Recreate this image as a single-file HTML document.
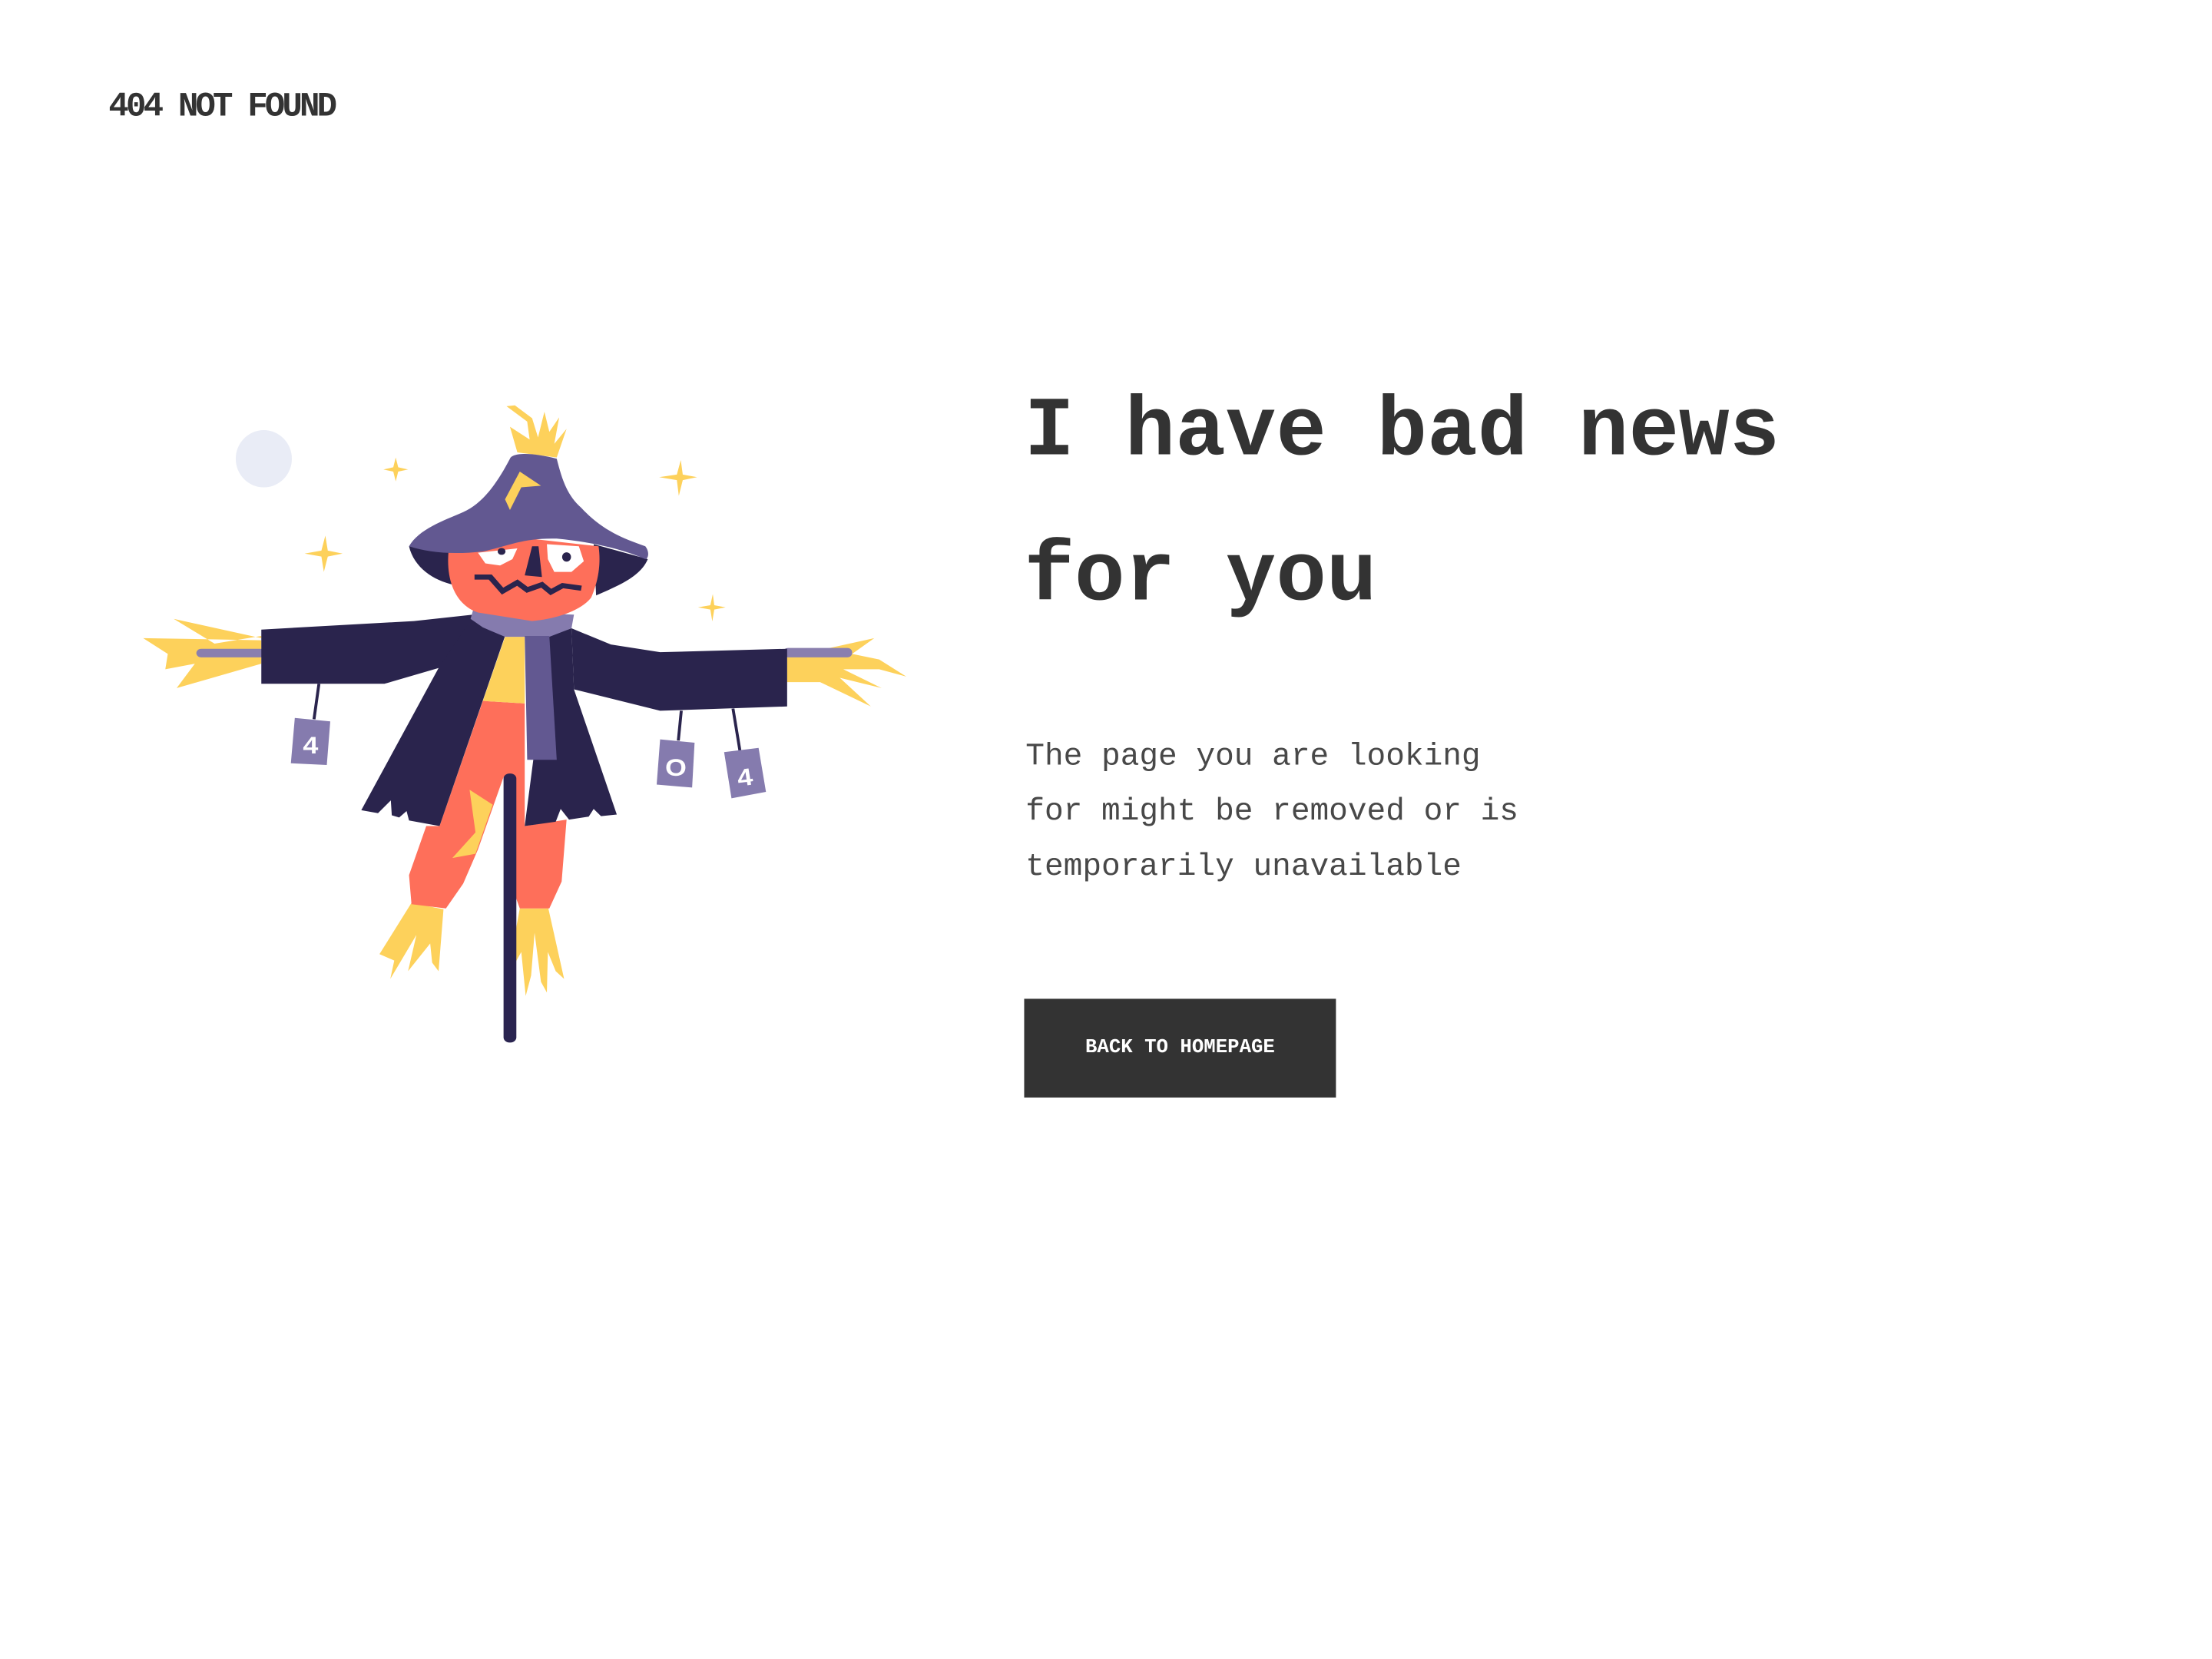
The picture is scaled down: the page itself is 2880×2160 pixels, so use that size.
<!DOCTYPE html>
<html><head><meta charset="utf-8"><style>
html,body{margin:0;padding:0;background:#fff;width:2880px;height:2160px;overflow:hidden}
#w{position:absolute;left:0;top:0;width:1568px;height:1176px;transform:scale(1.83673);transform-origin:0 0;font-family:"Liberation Mono","DejaVu Sans Mono",monospace;color:#333}
.logo{position:absolute;left:77px;top:62px;font-size:24px;font-weight:bold;letter-spacing:-2.1px;line-height:30px}
h1{position:absolute;left:726px;top:255px;margin:0;font-size:59.5px;font-weight:bold;line-height:103px;letter-spacing:0}
p{position:absolute;left:727px;top:517px;margin:0;font-size:22.4px;line-height:39px;color:#484848}
.btn{position:absolute;left:726px;top:708px;width:221px;height:70px;background:#333;color:#fff;font-size:14px;font-weight:bold;line-height:70px;text-align:center}
svg{position:absolute;left:0;top:0}
</style></head><body>
<div id="w">
<div class="logo">404 NOT FOUND</div>
<h1>I have bad news<br>for you</h1>
<p>The page you are looking<br>for might be removed or is<br>temporarily unavailable</p>
<div class="btn">BACK TO HOMEPAGE</div>
</div>
<svg width="2880" height="2160" viewBox="0 0 2880 2160">
<g transform="translate(180,500) scale(0.641,0.556)">
<ellipse cx="255" cy="175" rx="57" ry="67" fill="#e9ecf6"/>
<g fill="#fdd15b">
<path d="M523,172 L528,195 L548,200 L528,205 L523,228 L518,205 L498,200 L518,195Z"/>
<path d="M380,355 L385,390 L415,397 L385,404 L377,440 L372,404 L338,397 L372,390Z"/>
<path d="M1102,178 L1106,212 L1135,218 L1106,225 L1098,262 L1094,225 L1058,218 L1094,212Z"/>
<path d="M1167,492 L1170,518 L1193,523 L1170,528 L1166,556 L1162,528 L1137,523 L1162,518Z"/>
<path d="M250,590 L155,608 L72,550 L250,595 Z M250,600 L10,595 L60,632 L55,668 L115,655 L78,712 L250,655Z"/>
<path d="M1318,640 L1495,595 L1450,632 L1505,645 L1560,685 L1505,668 L1432,668 L1510,712 L1425,688 L1488,755 L1385,698 L1318,698Z"/>
<path d="M770,160 L755,100 L795,130 L790,88 L748,52 L765,50 L800,80 L812,125 L825,65 L835,112 L855,78 L845,140 L870,105 L850,172Z"/>
<path d="M555,1215 L620,1230 L610,1375 L597,1355 L593,1310 L548,1375 L565,1290 L512,1393 L520,1350 L490,1335Z"/>
<path d="M775,1228 L833,1228 L865,1393 L848,1375 L832,1330 L830,1425 L818,1400 L805,1285 L798,1385 L787,1433 L778,1330 L745,1398 L765,1290Z"/>
</g>
<rect x="118" y="620" width="140" height="20" rx="10" fill="#8a7fae"/>
<rect x="1310" y="618" width="140" height="22" rx="10" fill="#8a7fae"/>
<path d="M700,742 L785,748 L785,1035 L870,1020 L860,1165 L835,1228 L775,1228 L760,1180 L752,1100 L742,920 L690,1090 L660,1170 L625,1228 L555,1218 L550,1150 L585,1035 L612,1035Z" fill="#fe6f5a"/>
<path d="M673,950 L720,985 L685,1100 L638,1110 L685,1050Z" fill="#fdd15b"/>
<rect x="742" y="912" width="26" height="630" rx="12" fill="#2a2450"/>
<path d="M745,592 L785,592 L785,748 L700,742Z" fill="#fdd15b"/>
<g fill="#2a244d">
<path d="M250,575 L560,555 L680,540 L700,560 L610,665 L500,702 L250,702Z"/>
<path d="M880,572 L960,610 L1060,628 L1318,620 L1318,755 L1060,765 L885,715Z"/>
<path d="M680,545 L745,590 L612,1035 L550,1022 L545,1000 L530,1015 L515,1010 L513,975 L487,1005 L453,998 L610,665Z"/>
<path d="M880,572 L835,590 L785,1035 L848,1025 L858,995 L875,1020 L915,1013 L925,995 L940,1012 L972,1008 L885,715Z"/>
</g>
<path d="M680,530 L885,540 L880,572 L835,592 L745,592 L700,570 L675,550Z" fill="#857bae"/>
<path d="M785,590 L835,590 L850,880 L790,880Z" fill="#625891"/>
<path d="M550,380 C560,430 600,460 640,470 L640,395Z M925,375 L930,495 C980,470 1020,450 1035,410Z" fill="#2a244d"/>
<path d="M630,395 C625,470 650,520 690,535 L800,555 C850,550 900,530 920,500 C935,460 940,420 935,380 L780,360Z" fill="#fe6f5a"/>
<path d="M690,395 L770,385 L760,410 L735,425 L705,420Z M830,375 L895,380 L905,415 L880,440 L845,440 L832,410Z" fill="#fff"/>
<g fill="#2a244d">
<ellipse cx="870" cy="405" rx="9" ry="11"/><ellipse cx="738" cy="392" rx="8" ry="8"/>
<path d="M800,380 L813,380 L820,452 L785,448Z"/>
</g>
<polyline points="683,452 715,452 740,485 770,465 790,482 820,470 838,487 862,472 900,478" fill="none" stroke="#2a244d" stroke-width="12" stroke-linejoin="miter"/>
<path d="M550,380 C570,340 620,320 660,300 C700,280 730,230 755,175 C760,160 800,160 850,175 C860,220 870,260 900,290 C940,340 980,360 1030,380 C1040,395 1035,410 1030,410 C980,385 920,370 850,362 C780,360 750,380 700,392 C640,400 590,395 550,380Z" fill="#625891"/>
<path d="M745,270 L775,205 L818,238 L778,242 L755,295Z" fill="#fdd15b"/>
<g stroke="#2a244d" stroke-width="6"><line x1="367" y1="702" x2="357" y2="785"/><line x1="1103" y1="765" x2="1097" y2="835"/><line x1="1208" y1="760" x2="1222" y2="858"/></g>
<g fill="#857bae">
<path d="M318,782 L390,790 L383,892 L310,888Z"/>
<path d="M1060,832 L1130,840 L1125,945 L1053,938Z"/>
<path d="M1190,862 L1260,852 L1275,955 L1205,970Z"/>
</g>
<g fill="#fff" font-family="Liberation Sans,sans-serif" font-weight="bold" font-size="56" text-anchor="middle">
<text x="350" y="865">4</text><text x="1092" y="917">O</text><text x="1232" y="940" transform="rotate(-8 1232 920)">4</text>
</g>
</g>
</svg>
</body></html>
